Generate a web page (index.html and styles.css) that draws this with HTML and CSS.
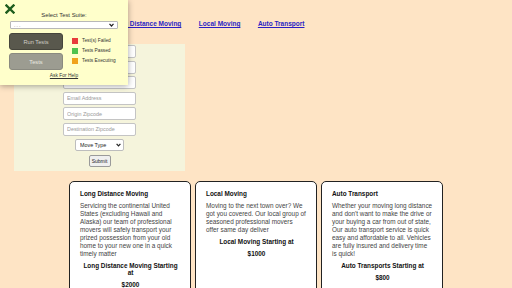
FILE: index.html
```html
<!DOCTYPE html>
<html>
	<head>
		<meta charset="UTF-8">
		<title>Moving Services</title>
		<link rel="stylesheet" href="styles.css">
	</head>
	<body>
		<div class="nav">
			<a href="#">Long Distance Moving</a>
			<a href="#">Local Moving</a>
			<a href="#">Auto Transport</a>
		</div>

		<div class="quote">
			<form class="quote-form">
				<input type="text" placeholder="First Name">
				<input type="text" placeholder="Last Name">
				<input type="text" placeholder="Phone Number">
				<input type="text" placeholder="Email Address">
				<input type="text" placeholder="Origin Zipcode">
				<input type="text" placeholder="Destination Zipcode">
				<span class="select-wrap">
					<select class="move-type">
						<option>Move Type</option>
					</select>
					<svg class="chev" width="5" height="4" viewBox="0 0 5 4"><path d="M0.6 0.8 L2.5 2.9 L4.4 0.8" fill="none" stroke="#222" stroke-width="1.2"/></svg>
				</span>
				<button type="button" class="submit">Submit</button>
			</form>
		</div>

		<div class="cards">
			<div class="card">
				<h3>Long Distance Moving</h3>
				<p>Servicing the continental United States (excluding Hawaii and Alaska) our team of professional movers will safely transport your prized possession from your old home to your new one in a quick timely matter</p>
				<h4>Long Distance Moving Starting at</h4>
				<div class="price">$2000</div>
			</div>
			<div class="card">
				<h3>Local Moving</h3>
				<p>Moving to the next town over? We got you covered. Our local group of seasoned professional movers offer same day deliver</p>
				<h4>Local Moving Starting at</h4>
				<div class="price">$1000</div>
			</div>
			<div class="card">
				<h3>Auto Transport</h3>
				<p>Whether your moving long distance and don't want to make the drive or your buying a car from out of state, Our auto transport service is quick easy and affordable to all. Vehicles are fully insured and delivery time is quick!</p>
				<h4>Auto Transports Starting at</h4>
				<div class="price">$800</div>
			</div>
		</div>

		<!-- test runner overlay -->
		<div class="tester">
			<svg class="tester-close" width="10" height="10" viewBox="0 0 10 10">
				<path d="M1.5 1.5 L8.5 8.5 M8.5 1.5 L1.5 8.5" stroke="#1d5c1d" stroke-width="2.4" stroke-linecap="square"/>
			</svg>
			<div class="tester-title">Select Test Suite:</div>
			<div class="tester-select">
				<span>- - -</span>
				<svg width="5" height="4" viewBox="0 0 5 4"><path d="M0.5 0.8 L2.5 3 L4.5 0.8" fill="none" stroke="#222" stroke-width="1.2"/></svg>
			</div>
			<div class="tester-body">
				<div class="tester-buttons">
					<button type="button" class="btn-run">Run Tests</button>
					<button type="button" class="btn-tests">Tests</button>
				</div>
				<ul class="legend">
					<li><span class="dot failed"></span>Test(s) Failed</li>
					<li><span class="dot passed"></span>Tests Passed</li>
					<li><span class="dot running"></span>Tests Executing</li>
				</ul>
			</div>
			<a href="#" class="help">Ask For Help</a>
		</div>
	</body>
</html>
```

FILE: styles.css
```css
body{
	margin: 0;
	background: #fee4c5;
	font-family: "Liberation Sans", Arial, sans-serif;
	color: #222;
}

/* top links */
.nav{
	display: flex;
	gap: 17.5px;
	padding: 20px 0 0 112px;
	font-size: 6.5px;
	line-height: 8px;
	font-weight: bold;
}
.nav a{
	color: #2a1fc4;
}

/* quote form */
.quote{
	width: 171px;
	margin: 16px 0 0 14px;
	background: #f5f4dc;
}
.quote-form{
	display: flex;
	flex-direction: column;
	align-items: center;
	gap: 2.6px;
	padding: 1px 0 4px;
}
.quote-form input{
	box-sizing: border-box;
	width: 73px;
	height: 13px;
	padding: 0 3px;
	border: 1px solid #c4c4c4;
	border-radius: 2px;
	background: #fff;
	font-family: inherit;
	font-size: 5.4px;
	outline: none;
}
.quote-form input::placeholder{
	color: #9a9a9a;
}
.select-wrap{
	position: relative;
	display: block;
	width: 49px;
	height: 12px;
}
.move-type{
	appearance: none;
	-webkit-appearance: none;
	display: block;
	box-sizing: border-box;
	width: 49px;
	height: 12px;
	margin: 0;
	padding: 0 0 0 4px;
	border: 1px solid #bdbdbd;
	border-radius: 2px;
	background: #fff;
	font-family: inherit;
	font-size: 5.4px;
	line-height: 10px;
	color: #222;
}
.chev{
	position: absolute;
	right: 3px;
	top: 4px;
	pointer-events: none;
}
.submit{
	box-sizing: border-box;
	width: 22px;
	height: 12px;
	margin-top: 1.4px;
	padding: 0;
	border: 1px solid #9a9a9a;
	border-radius: 2px;
	background: #efefef;
	font-family: inherit;
	font-size: 5px;
	color: #222;
}

/* service cards */
.cards{
	display: flex;
	justify-content: center;
	gap: 4px;
	margin-top: 10px;
}
.card{
	box-sizing: border-box;
	width: 122px;
	min-height: 130px;
	padding: 8px 9px 0 10px;
	background: #fff;
	border: 1px solid #222;
	border-radius: 5px;
	font-size: 6.4px;
	line-height: 8px;
}
.card h3{
	margin: 0 0 4px;
	font-size: 6.4px;
	color: #111;
}
.card p{
	margin: 0;
	color: #444;
}
.card h4{
	margin: 4px 0 0;
	font-size: 6.4px;
	line-height: 7px;
	text-align: center;
	color: #111;
}
.card .price{
	margin-top: 5px;
	font-weight: bold;
	text-align: center;
	color: #111;
}

/* test runner */
.tester{
	position: absolute;
	left: 0;
	top: 0;
	box-sizing: border-box;
	width: 128px;
	height: 85px;
	padding: 11px 10px 0;
	background: #ffffcb;
	box-shadow: 0 1px 6px rgba(0,0,0,0.35);
	text-align: center;
}
.tester-close{
	position: absolute;
	left: 5px;
	top: 4px;
}
.tester-title{
	font-size: 5.9px;
	line-height: 8px;
	color: #333;
}
.tester-select{
	display: flex;
	justify-content: space-between;
	align-items: center;
	box-sizing: border-box;
	height: 8px;
	margin-top: 2px;
	padding: 0 3px 0 3px;
	background: #fff;
	border: 1px solid #b8b8b8;
	border-radius: 1px;
	font-size: 4px;
	color: #666;
}
.tester-body{
	display: flex;
	gap: 9px;
	margin: 4px 0 0 -1px;
}
.tester-buttons{
	display: flex;
	flex-direction: column;
	gap: 3px;
}
.tester-buttons button{
	box-sizing: border-box;
	width: 54px;
	height: 17px;
	padding: 0;
	border-radius: 3px;
	font-family: inherit;
	font-size: 5.7px;
}
.btn-run{
	background: #59584d;
	border: 1px solid #46453c;
	color: #cfcfc6;
}
.btn-tests{
	background: #9c9c91;
	border: 1px solid #8a8a80;
	color: #ebebe2;
}
.legend{
	list-style: none;
	margin: 3px 0 0;
	padding: 0;
	text-align: left;
	font-size: 4.8px;
	line-height: 10px;
	color: #333;
}
.legend li{
	display: flex;
	align-items: center;
	gap: 4px;
}
.dot{
	width: 6px;
	height: 6px;
}
.failed{
	background: #e83b3b;
}
.passed{
	background: #4fc34f;
}
.running{
	background: #f0a21c;
}
.help{
	display: block;
	margin-top: 3px;
	font-size: 4.9px;
	line-height: 6px;
	color: #333;
}
```
